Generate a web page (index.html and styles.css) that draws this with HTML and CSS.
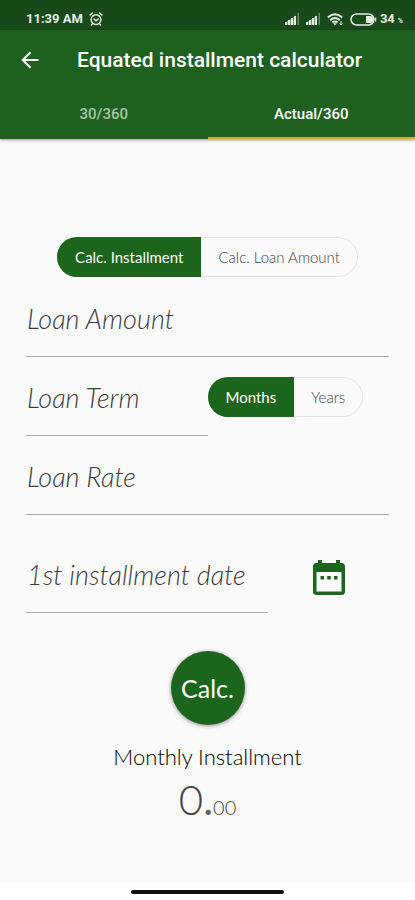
FILE: index.html
```html
<!DOCTYPE html>
<html lang="en">
<head>
<meta charset="utf-8">
<meta name="viewport" content="width=device-width, initial-scale=1">
<title>Equated installment calculator</title>
<link rel="stylesheet" href="styles.css">
</head>
<body>
<div class="status">
  <span class="time">11:39 AM</span>
  <svg class="alarm" width="14" height="14" viewBox="0 0 14 14" fill="none" stroke="currentColor" stroke-width="1.4" stroke-linecap="round"><circle cx="7" cy="7.6" r="4.9"/><path d="M1 3 3.4 1M13 3 10.6 1M5 7l2 1.8L9.2 7M3.4 12l-1 1M10.6 12l1 1"/></svg>
  <span class="indicators">
    <svg width="15" height="12" viewBox="0 0 15 12" fill="currentColor"><path d="M0 9.500 11 2.500V12H0z" opacity=".45"/><path d="M0 9h2v3H0zM3 7h2v5H3zM6 5h2v7H6zM9 3h2v9H9z"/><path d="M12.500 0h1.500v12h-1.500z" opacity=".4"/></svg>
    <svg width="15" height="12" viewBox="0 0 15 12" fill="currentColor"><path d="M0 9.500 11 2.500V12H0z" opacity=".45"/><path d="M0 9h2v3H0zM3 7h2v5H3zM6 5h2v7H6zM9 3h2v9H9z"/><path d="M12.500 0h1.500v12h-1.500z" opacity=".4"/></svg>
    <svg class="wifi" width="17" height="13" viewBox="0 0 17 13" fill="none" stroke="currentColor" stroke-width="1.900"><path d="M.8 4.500Q8-1.800 15.200 4.500M3.200 7.200Q8 3 12.800 7.200M5.400 9.600Q8 7.500 10.600 9.600"/><path d="M6.200 10.300h3.600L8 12.500z" fill="currentColor" stroke="none"/><path d="M14 8v4M12.500 10.500l1.500 1.500 1.500-1.500" stroke-width="1"/></svg>
    <svg class="battery" width="27" height="13" viewBox="0 0 27 13"><rect x="1" y="1" width="23" height="11" rx="5.500" fill="none" stroke="currentColor" stroke-width="1.500"/><path d="M16 3h4a3.500 3.500 0 0 1 0 7h-4z" fill="currentColor"/><path d="M25.700 4.500v4" stroke="currentColor" stroke-width="1.200"/></svg>
    <span class="level">34</span><span class="percent">%</span>
  </span>
</div>
<header class="header">
  <div class="bar">
    <button class="back" type="button" aria-label="Back"><svg width="18" height="18" viewBox="0 0 18 18" fill="none" stroke="currentColor" stroke-width="2"><path d="M17.500 9H2M9.500 1.200 1.700 9l7.800 7.800"/></svg></button>
    <h1 class="title">Equated installment calculator</h1>
  </div>
  <nav class="tabs" role="tablist">
    <button class="tab" type="button" role="tab" aria-selected="false">30/360</button>
    <button class="tab tab-active" type="button" role="tab" aria-selected="true">Actual/360</button>
  </nav>
</header>
<main class="main">
  <div class="segments mode">
    <button class="segment segment-on" type="button" aria-pressed="true">Calc. Installment</button>
    <button class="segment" type="button" aria-pressed="false">Calc. Loan Amount</button>
  </div>
  <form class="form">
    <input class="field" type="text" aria-label="Loan Amount" placeholder="Loan Amount">
    <div class="row">
      <input class="field" type="text" aria-label="Loan Term" placeholder="Loan Term">
      <div class="side">
        <div class="segments">
          <button class="segment segment-on" type="button" aria-pressed="true">Months</button>
          <button class="segment" type="button" aria-pressed="false">Years</button>
        </div>
      </div>
    </div>
    <input class="field" type="text" aria-label="Loan Rate" placeholder="Loan Rate">
    <div class="row row-date">
      <input class="field" type="text" aria-label="1st installment date" placeholder="1st installment date">
      <div class="side side-icon">
        <button class="calendar" type="button" aria-label="Pick a date"><svg width="32" height="36" viewBox="0 0 32 36"><path fill="currentColor" fill-rule="evenodd" d="M5 0h4v3h14V0h4v3h1.500A3.500 3.500 0 0 1 32 6.500v25a3.500 3.500 0 0 1-3.500 3.500h-25A3.500 3.500 0 0 1 0 31.500v-25A3.500 3.500 0 0 1 3.500 3H5zM3.500 12v19.500h25V12zM7.500 16h3.500v3.500H7.500zM14.200 16h3.600v3.500h-3.600zM21 16h3.500v3.500H21z"/></svg></button>
      </div>
    </div>
    <button class="calc" type="button">Calc.</button>
  </form>
  <section class="result">
    <h2 class="caption">Monthly Installment</h2>
    <p class="amount">0<span class="point">.</span><span class="cents">00</span></p>
  </section>
</main>
<footer class="gesture"><div class="handle"></div></footer>
</body>
</html>
```
FILE: styles.css
```css
* { box-sizing: border-box; }
body {
  margin: 0;
  min-height: 100vh;
  display: flex;
  flex-direction: column;
  background: #fafafa;
  font-family: Lato, sans-serif;
}
button { border: 0; padding: 0; background: none; font: inherit; color: inherit; }
svg { display: block; }

.status {
  display: flex;
  align-items: center;
  height: 30px;
  padding: 8px 12px 0 26px;
  background: #174919;
  color: #e6eee6;
  font: 700 13px/16px Roboto, sans-serif;
}
.alarm { margin-left: 6px; }
.indicators { display: flex; align-items: center; margin-left: auto; }
.indicators svg { margin-right: 6px; }
.indicators .battery { margin-right: 3px; }
.percent { font-size: 7px; margin: 4px 0 0 3px; }

.header {
  background: #1e611f;
  color: #fff;
  font-family: Roboto, sans-serif;
  box-shadow: 0 1px 3px rgba(0, 0, 0, .4);
}
.bar { display: flex; align-items: center; height: 60px; padding: 0 21px; }
.back { width: 56px; }
.title { margin: 0; font-size: 21px; font-weight: 500; line-height: 28px; }
.tabs { display: grid; grid-template-columns: 1fr 1fr; }
.tab {
  height: 49px;
  border-bottom: 2px solid transparent;
  font-size: 15px;
  font-weight: 500;
  color: #a9c5a8;
}
.tab-active { color: #fff; border-color: #e5a52c; }

.main { flex: 1; padding: 98px 26px 0; }
.segments {
  display: flex;
  width: max-content;
  height: 40px;
  border: 1px solid #e6e6e6;
  border-radius: 20px;
  color: #444;
  font-size: 15px;
  font-weight: 300;
}
.mode { margin: 0 auto 21px; }
.segment { padding: 0 17px; }
.segment-on {
  margin: -1px 0 -1px -1px;
  padding: 0 18px;
  border-radius: 20px 0 0 20px;
  background: #1b651c;
  color: #fff;
  font-weight: 400;
}
.form { display: flex; flex-direction: column; gap: 20px; }
.field {
  width: 100%;
  height: 59px;
  padding: 0 0 18px 1px;
  border: 0;
  border-bottom: 1px solid #aaa;
  border-radius: 0;
  background: none;
  font: italic 300 27px/40px Lato, sans-serif;
}
.field::placeholder { color: #3c3c3c; opacity: 1; }
.row { display: grid; grid-template-columns: 1fr 1fr; }
.row-date { grid-template-columns: 2fr 1fr; margin-top: 19px; }
.side-icon { display: flex; justify-content: center; padding-top: 6px; }
.calendar { color: #1b651c; height: 36px; }
.calc {
  align-self: center;
  width: 74px;
  height: 74px;
  margin-top: 18px;
  border-radius: 50%;
  background: #1b651c;
  color: #fff;
  font-size: 25px;
  box-shadow: 0 1px 4px rgba(0, 0, 0, .4);
}
.result { padding-top: 18px; text-align: center; }
.caption { margin: 0; font-size: 22px; font-weight: 300; line-height: 28px; color: #000; }
.amount { margin: 0; font-size: 42px; font-weight: 300; line-height: 56px; color: #444; }
.point { font-weight: 400; color: #666; }
.cents { font-size: 20px; }
.gesture { display: flex; justify-content: center; padding: 7px 0 6px; background: #fff; }
.handle { width: 37%; height: 4px; border-radius: 2px; background: #111; }
```
